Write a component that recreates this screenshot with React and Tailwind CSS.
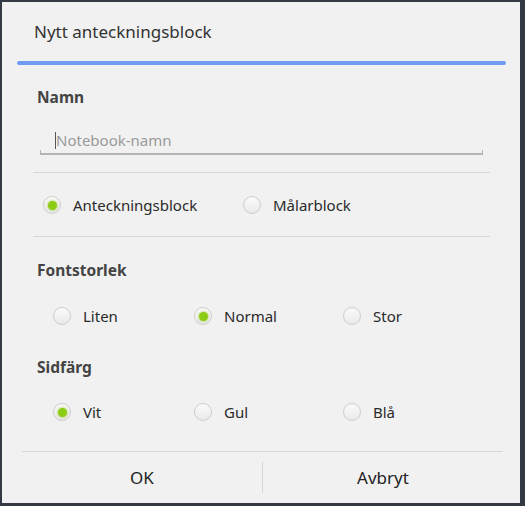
import React, { useState } from 'react';

// Radio bullet in the old Android style
const Radio = ({ checked }) => (
    <span className="w-[18px] h-[18px] rounded-full border border-[#cdcdcd] bg-gradient-to-b from-[#fbfbfb] to-[#e9e9e9] flex items-center justify-center shrink-0">
        {checked && <span className="w-[9px] h-[9px] rounded-full bg-[#8ccc14] shadow-[0_0_2px_1px_rgba(160,210,60,0.5)]" />}
    </span>
);

const Option = ({ label, checked, onClick }) => (
    <button onClick={onClick} className="flex items-center gap-[12px] h-[30px] text-[15px] text-[#2a2a2a]">
        <Radio checked={checked} />
        <span>{label}</span>
    </button>
);

const Divider = ({ className }) => <div className={`h-px bg-[#d6d6d6] ${className}`} />;

export default function App() {
    const [kind, setKind] = useState('note');
    const [size, setSize] = useState('normal');
    const [color, setColor] = useState('vit');

    return (
        <div className="w-[525px] h-[506px] bg-[#343a44] pt-[2px] pl-[2px] overflow-hidden" style={{ fontFamily: '"Noto Sans", "Open Sans", sans-serif' }}>
            <div className="w-[518px] h-[501px] bg-[#f1f1f1] flex flex-col">
                {/* Title */}
                <div className="h-[59px] flex items-center pl-[32px] text-[17px] text-[#333]">Nytt anteckningsblock</div>
                <div className="h-[4px] ml-[15px] mr-[14px] bg-[#6f9cf2] rounded-full" />

                {/* Namn */}
                <div className="mt-[23px] h-[20px] flex items-center pl-[35px] text-[15.5px] font-bold text-[#444]">Namn</div>
                <div className="mt-[22px] ml-[38px] w-[443px] h-[26px] relative">
                    <div className="h-[20px] flex items-center pl-[16px] text-[15px] text-[#9a9a9a]">
                        <span className="w-px h-[17px] bg-[#555] -ml-px" />
                        Notebook-namn
                    </div>
                    <div className="absolute left-0 right-0 bottom-px h-[2px] bg-[#b4b4b4]" />
                    <div className="absolute left-0 bottom-px w-px h-[5px] bg-[#b4b4b4]" />
                    <div className="absolute right-0 bottom-px w-px h-[5px] bg-[#b4b4b4]" />
                </div>
                <Divider className="mt-[16px] ml-[31px] w-[457px]" />

                {/* Typ */}
                <div className="mt-[17px] ml-[41px] flex">
                    <div className="w-[200px]">
                        <Option label="Anteckningsblock" checked={kind === 'note'} onClick={() => setKind('note')} />
                    </div>
                    <Option label="Målarblock" checked={kind === 'paint'} onClick={() => setKind('paint')} />
                </div>
                <Divider className="mt-[16px] ml-[31px] w-[457px]" />

                {/* Fontstorlek */}
                <div className="mt-[24px] h-[20px] flex items-center pl-[35px] text-[15.5px] font-bold text-[#444]">Fontstorlek</div>
                <div className="mt-[20px] ml-[51px] grid grid-cols-[141px_149px_1fr]">
                    <Option label="Liten" checked={size === 'liten'} onClick={() => setSize('liten')} />
                    <Option label="Normal" checked={size === 'normal'} onClick={() => setSize('normal')} />
                    <Option label="Stor" checked={size === 'stor'} onClick={() => setSize('stor')} />
                </div>

                {/* Sidfärg */}
                <div className="mt-[27px] h-[20px] flex items-center pl-[35px] text-[15.5px] font-bold text-[#444]">Sidfärg</div>
                <div className="mt-[19px] ml-[51px] grid grid-cols-[141px_149px_1fr]">
                    <Option label="Vit" checked={color === 'vit'} onClick={() => setColor('vit')} />
                    <Option label="Gul" checked={color === 'gul'} onClick={() => setColor('gul')} />
                    <Option label="Blå" checked={color === 'bla'} onClick={() => setColor('bla')} />
                </div>

                {/* Buttons */}
                <Divider className="mt-[24px] ml-[20px] w-[481px]" />
                <div className="flex-1 ml-[20px] w-[481px] flex items-center">
                    <button className="flex-1 h-full flex items-center justify-center text-[17px] text-[#222]">OK</button>
                    <div className="w-px h-[31px] bg-[#d6d6d6]" />
                    <button className="flex-1 h-full flex items-center justify-center text-[17px] text-[#222]">Avbryt</button>
                </div>
            </div>
        </div>
    );
}
